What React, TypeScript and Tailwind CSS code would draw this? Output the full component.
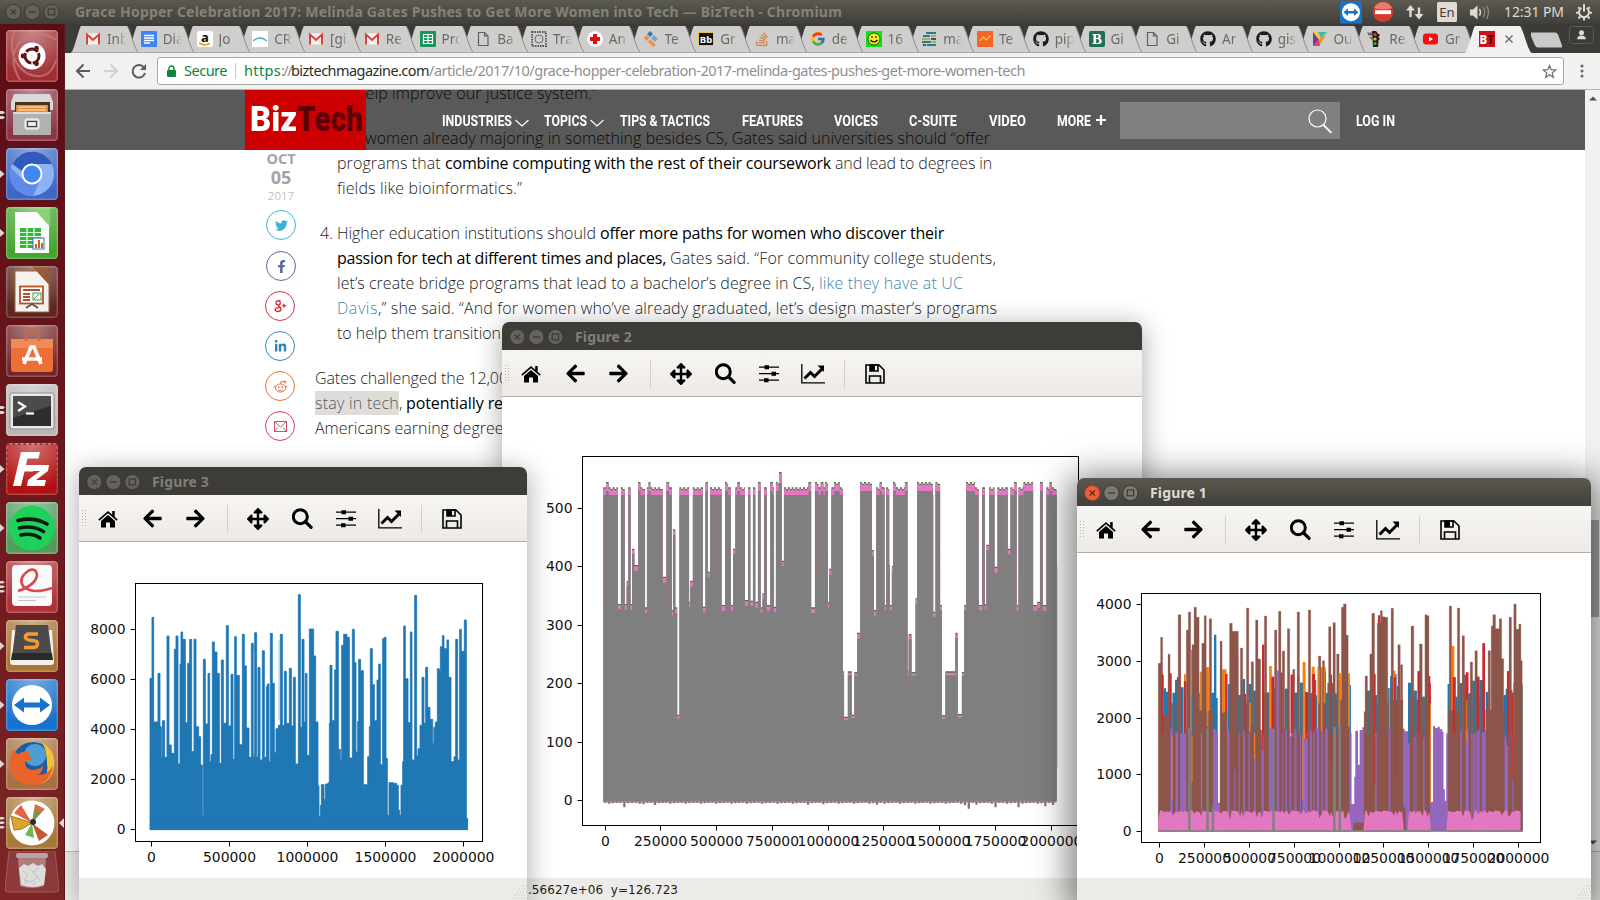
import React, { useLayoutEffect, useRef } from "react";
import {
  FaArrowLeft, FaArrowRight, FaArrowsAlt, FaFacebookF, FaGithub,
  FaLinkedinIn, FaStackOverflow, FaTwitter,
} from "react-icons/fa";
import { FcGoogle } from "react-icons/fc";

/* ---------- text set to a fixed measure ---------- */

type FitProps = { w: number; children: string; className?: string; squeeze?: boolean };

function Fit({ w, children, className = "", squeeze = false }: FitProps) {
  const ref = useRef<HTMLSpanElement>(null);
  useLayoutEffect(() => {
    const el = ref.current;
    if (!el) return;
    el.style.letterSpacing = "0px";
    el.style.transform = "none";
    const natural = el.getBoundingClientRect().width;
    if (squeeze) el.style.transform = `scaleX(${w / natural})`;
    else el.style.letterSpacing = `${(w - natural) / children.length}px`;
  }, [w, children, squeeze]);
  return (
    <span className={`inline-block shrink-0 whitespace-pre ${className}`} style={{ width: w }}>
      <span ref={ref} className="inline-block origin-left whitespace-pre">{children}</span>
    </span>
  );
}

/* ---------- top panel ---------- */

function PanelButtons({ active = false }: { active?: boolean }) {
  return (
    <svg className="shrink-0" width="57" height="18" viewBox="0 0 57 18">
      <circle cx="9.3" cy="9" r="7.6" fill={active ? "#e9603a" : "#64625b"} stroke={active ? "#a8401f" : "#35342f"} strokeWidth="0.8" />
      <path d="M6.6 6.3l5.4 5.4M12 6.3l-5.4 5.4" stroke={active ? "#5c1f0d" : "#3b3a35"} strokeWidth="1.2" />
      <circle cx="28.4" cy="9" r="7.6" fill={active ? "#7b7970" : "#64625b"} stroke="#35342f" strokeWidth="0.8" />
      <path d="M24.8 9h7.2" stroke="#3b3a35" strokeWidth="1.3" />
      <circle cx="47.4" cy="9" r="7.6" fill={active ? "#7b7970" : "#64625b"} stroke="#35342f" strokeWidth="0.8" />
      <rect x="44.2" y="6" width="6.4" height="5.8" fill="none" stroke="#3b3a35" strokeWidth="1.2" />
    </svg>
  );
}

function TopPanel() {
  return (
    <div className="flex h-6 w-full items-center bg-linear-to-b from-[#5c5a50] to-[#403f3a] pl-[4px]">
      <PanelButtons />
      <Fit w={767} className="ml-[14px] text-[14px] leading-6 font-bold text-[#85827a]">
        Grace Hopper Celebration 2017: Melinda Gates Pushes to Get More Women into Tech — BizTech - Chromium
      </Fit>
      <svg className="ml-auto shrink-0" width="160" height="24" viewBox="0 0 160 24">
        <rect x="0" y="1" width="22" height="22.5" rx="1.5" fill="#1672cc" />
        <circle cx="11" cy="12.2" r="9" fill="#fff" />
        <path d="M3.5 12.2l4.5-3.7v2.4h6v-2.4l4.5 3.7-4.5 3.7v-2.4h-6v2.4z" fill="#1672cc" />
        <circle cx="43" cy="12" r="10.2" fill="#d8392f" />
        <path d="M34 8a10 10 0 0 1 18 0q-9 3-18 0z" fill="#ea7a72" />
        <rect x="35" y="10.3" width="16" height="3.8" fill="#fff" />
        <path d="M66 10.500h3.300V17h2.400v-6.500H75l-4.500-5.500zM74.500 14h3.300V7.500h2.400V14h3.300l-4.500 5.500z" fill="#dfdbd2" />
        <rect x="97" y="2" width="20" height="20" rx="1.500" fill="#dfdbd2" />
        <path d="M130 9.500h3l4.500-4v14l-4.500-4h-3z" fill="#dfdbd2" />
        <path d="M139.500 9q2 3.300 0 6.600" stroke="#dfdbd2" strokeWidth="1.400" fill="none" />
        <path d="M143 7q3.300 5.300 0 10.600M146.500 5.500q4 6.800 0 13.600" stroke="#89867c" strokeWidth="1.400" fill="none" />
        <text x="107" y="17" fontSize="13" textAnchor="middle" fill="#3c3b37">En</text>
      </svg>
      <Fit w={60} className="ml-[4px] text-[14px] leading-6 text-[#dfdbd2]">12:31 PM</Fit>
      <svg className="mr-[7px] ml-[11px] shrink-0" width="18" height="18" viewBox="0 0 18 18" fill="none" stroke="#dfdbd2">
        <path d="M6.300 5a5 5 0 1 0 5.400 0" strokeWidth="2" />
        <path d="M9 1v7.500M3.200 4.200l1.700 1.300M14.800 4.200l-1.700 1.300M1 9.800h2.400M14.600 9.800H17M3.500 15.500l1.500-1.800M14.500 15.500L13 13.700M9 15v2.500" strokeWidth="2" />
      </svg>
    </div>
  );
}

/* ---------- browser chrome ---------- */

const gmail = (
  <g>
    <rect x="1" y="2.500" width="14" height="11" fill="#f3f1f0" />
    <path d="M2 13.500V3.500l6 5.500 6-5.500v10" fill="none" stroke="#d5433a" strokeWidth="2" />
  </g>
);
const sheet = <path d="M3.500 1.500h6l3.500 3.500v9.500h-9.500zM9.500 1.500V5H13" fill="none" stroke="#5f5f5f" strokeWidth="1.200" />;
const github = <FaGithub size={16} color="#1b1b1b" />;

const tabs: [string, React.ReactNode][] = [
  ["Inb", gmail],
  ["Dia", <g><rect width="16" height="16" rx="1" fill="#4385f0" /><path d="M3 4.500h10M3 7h10M3 9.500h10M3 12h6" stroke="#fff" strokeWidth="1.300" /></g>],
  ["Jo", <g><rect width="16" height="16" rx="2" fill="#fff" /><text x="8" y="10.500" fontSize="13" fontWeight="700" textAnchor="middle" fill="#111">a</text><path d="M2 12q6 3.500 11 .3" stroke="#f59a1b" strokeWidth="1.600" fill="none" /></g>],
  ["CR", <g><rect width="16" height="16" fill="#fff" /><path d="M1 10q7-6 14 0" stroke="#4ba7cb" strokeWidth="1.300" fill="none" /></g>],
  ["[gi", gmail],
  ["Re", gmail],
  ["Pro", <g><rect width="16" height="16" rx="1" fill="#17945a" /><path d="M3.500 3.500h9v9h-9zM3.500 6.500h9M3.500 9.500h9M8 3.500v9" stroke="#fff" fill="none" strokeWidth="1.200" /></g>],
  ["Ba", sheet],
  ["Tra", <g fill="none" stroke="#555"><rect x="1" y="1" width="14" height="14" strokeDasharray="1.500 1" strokeWidth="1.800" /><circle cx="8" cy="8" r="4" strokeWidth=".8" /></g>],
  ["An", <g><circle cx="8" cy="8" r="7.800" fill="#fff" /><path d="M8 3v10M3 8h10" stroke="#df1010" strokeWidth="4" /></g>],
  ["Te", <g><path d="M7 0l3 3-3 3-3-3z" fill="#3b78a8" /><path d="M3.500 4l3 3-3 3-3-3z" fill="#e8924a" /><path d="M11 4l4 4-3 3-4-4z" fill="#6fa9cf" /><path d="M7 8l6 6-3 2-5-5z" fill="#e8924a" /></g>],
  ["Gr", <g><rect y="1" width="16" height="14" fill="#f0c23a" /><rect x="1" y="2" width="14" height="12" fill="#111" /><text x="8" y="12" fontSize="9.500" fontWeight="700" textAnchor="middle" fill="#fff">Bb</text></g>],
  ["ma", <FaStackOverflow size={16} color="#dd8148" />],
  ["de", <FcGoogle size={16} />],
  ["16", <g><rect width="16" height="16" fill="#16df16" /><circle cx="8" cy="8" r="6" fill="#f4ee27" stroke="#222" strokeWidth=".8" /><path d="M6 5v2M10 5v2M4.500 9q3.500 4 7 0" stroke="#111" strokeWidth="1.200" fill="none" /></g>],
  ["ma", <g strokeWidth="2.200"><path d="M5 2h10M2 5h7M1 11h9M6 14h9" stroke="#2b7d8c" /><path d="M10 5h5M1 8h8M11 11h4" stroke="#9db544" /><path d="M10 8h5M2 14h3" stroke="#245c82" /></g>],
  ["Te", <g><rect width="16" height="16" fill="#f2662b" /><path d="M2.500 10l4-4 3 3 4-4.500" stroke="#ffbf36" strokeWidth="1.400" fill="none" /></g>],
  ["pip", github],
  ["Gi", <g><rect width="16" height="16" rx="2" fill="#1f6e57" /><text x="8" y="13.300" fontSize="15" fontWeight="700" textAnchor="middle" fill="#fff" className="font-['Liberation_Serif']">B</text></g>],
  ["Gi", sheet],
  ["Ar", github],
  ["gis", github],
  ["Ou", <g><path d="M1 1h14L11 8 5 9z" fill="#f7c928" /><path d="M6 1h9L9 7z" fill="#38b8c8" /><path d="M1 1l6 8-6 6z" fill="#6c3d9e" /><path d="M14 4L7 15 6 9z" fill="#f08a28" /><path d="M1 15l6-6 1 6z" fill="#e23c6a" /></g>],
  ["Re", <g><path d="M0 1.500h5l1 3H1.500zM2 6h3v3" fill="#6f6f6f" /><path d="M5 0h4l3 4-1 12H6z" fill="#26201c" /><path d="M10 4h2.500M10 8h2.500" stroke="#26201c" strokeWidth="2" /><circle cx="8" cy="3.500" r="1.600" fill="#e0402c" /><circle cx="8" cy="8" r="1.600" fill="#edb52b" /><circle cx="8" cy="12.500" r="1.600" fill="#2fae5b" /></g>],
  ["Gr", <g><rect x="0" y="2.500" width="15" height="11" rx="3" fill="#f50f0f" /><path d="M6 5.500v5l4-2.500z" fill="#fff" /></g>],
];

function Tabs() {
  return (
    <div className="flex h-[29px] w-full items-end bg-[#3c3b37] pl-[6px]">
      {tabs.map(([label, icon], i) => (
        <div key={i} className="relative flex h-7 w-[55.76px] shrink-0 items-center pl-[14px]" style={{ zIndex: 30 - i }}>
          <svg className="absolute top-0 left-0" width="68" height="28" viewBox="0 0 68 28">
            <path d="M0 28C3 26 8 3 10 1H56C59 3 64 27 68 28z" fill="#d0cecc" />
            <path d="M56 1C59 3 64 27 68 28" fill="none" stroke="#8d8b88" strokeWidth="1" />
            <path d="M0 27.500h68" stroke="#aaa8a4" />
          </svg>
          <svg className="relative shrink-0" width="16" height="16" viewBox="0 0 16 16">{icon}</svg>
          <span className="relative ml-[6px] h-5 w-[19px] overflow-hidden text-[13.500px] leading-5 whitespace-nowrap text-[#6b6966] [mask-image:linear-gradient(to_right,black_55%,transparent)]">{label}</span>
        </div>
      ))}
      <div className="relative z-40 flex h-7 w-[66px] shrink-0 items-center pl-[14px]">
        <svg className="absolute top-0 left-0" width="68" height="28" viewBox="0 0 68 28">
          <path d="M0 28C3 26 8 3 10 1H55C58 3 63 27 67 28z" fill="#f2f1f0" />
        </svg>
        <svg className="relative" width="16" height="16" viewBox="0 0 16 16">
          <rect width="16" height="16" fill="#cc1218" />
          <text x=".5" y="12.500" fontSize="11.500" fontWeight="800" fill="#fff">B</text>
          <text x="8.300" y="12.500" fontSize="11.500" fontWeight="800" fill="#51080b">T</text>
        </svg>
        <svg className="relative ml-[10px]" width="8" height="8" viewBox="0 0 8 8"><path d="M.5.5l7 7M7.500.5l-7 7" stroke="#6d6b69" strokeWidth="1.400" /></svg>
      </div>
      <svg className="shrink-0" width="68" height="28" viewBox="0 0 68 28">
        <path d="M-1 7.500h25q2 0 3 2l4 11q.5 2-1 2H7q-2 0-3-2L-1 9q0-1.500 1-1.500z" fill="#cbc9c7" />
        <rect x="38.500" y="1.500" width="24" height="17" rx="3" fill="none" stroke="#5d5b55" />
        <circle cx="50.500" cy="7.800" r="2.500" fill="#dedbd5" />
        <path d="M46.200 14.200q0-3.700 4.300-3.700t4.300 3.700z" fill="#dedbd5" />
      </svg>
    </div>
  );
}

function AddressBar() {
  return (
    <div className="flex h-[37px] w-full items-center border-b border-[#b5b3b0] bg-[#f2f1f0] pl-[10px]">
      <svg className="shrink-0" width="72" height="18" viewBox="0 0 72 18" fill="none" strokeWidth="2">
        <path d="M15 9H2.500M8.500 2.500L2 9l6.500 6.500" stroke="#5c5b59" />
        <path d="M29 9h12.500M35.500 2.500L42 9l-6.500 6.500" stroke="#d3d1ce" />
        <path d="M69 5.500A6.300 6.300 0 1 0 70 11" stroke="#5c5b59" />
        <path d="M71 2v6h-6z" fill="#5c5b59" stroke="none" />
      </svg>
      <div className="ml-[10px] flex h-7 w-[1407px] items-center rounded-[3px] border border-[#a9a7a4] bg-white pl-[9px] text-[14.500px]">
        <svg className="shrink-0" width="9" height="12" viewBox="0 0 9 12">
          <rect y="5" width="9" height="7" rx="1" fill="#11833f" />
          <path d="M2 5V3.500a2.500 2.500 0 0 1 5 0V5" fill="none" stroke="#11833f" strokeWidth="1.400" />
        </svg>
        <Fit w={43} className="ml-[8px] text-[#11833f]">Secure</Fit>
        <span className="mx-[8px] h-4 w-px bg-[#c9c7c5]" />
        <Fit w={37} className="text-[#11833f]">https</Fit>
        <Fit w={10} className="text-[#8f8f8f]">://</Fit>
        <Fit w={138} className="text-[#2c2c2c]">biztechmagazine.com</Fit>
        <Fit w={596} className="text-[#8f8f8f]">/article/2017/10/grace-hopper-celebration-2017-melinda-gates-pushes-get-more-women-tech</Fit>
        <svg className="mr-[6px] ml-auto" width="15" height="15" viewBox="0 0 15 15">
          <path d="M7.500 1.500l1.700 4.200 4.500.3-3.500 2.900 1.200 4.400-3.900-2.500-3.900 2.500 1.200-4.400L1.300 6l4.500-.3z" fill="none" stroke="#6b6a68" strokeWidth="1.200" />
        </svg>
      </div>
      <svg className="ml-[16px]" width="4" height="14" viewBox="0 0 4 14" fill="#6b6a68">
        <circle cx="2" cy="2" r="1.600" /><circle cx="2" cy="7" r="1.600" /><circle cx="2" cy="12" r="1.600" />
      </svg>
    </div>
  );
}

/* ---------- article page ---------- */

const lineCls = "flex h-[25px] items-center";
const strong = "font-medium text-black";
const link = "text-[#3f86ae]";

function Article() {
  return (
    <div className="mt-[-9.5px] flex flex-col gap-5 text-[16px] font-light text-[#1c1c1c]">
      <div className={`${lineCls} pl-[41px]`}><Fit w={241}>help improve our justice system.”</Fit></div>
      <div className="pl-[22px]">
        <div className={lineCls}><Fit w={653}>For women already majoring in something besides CS, Gates said universities should “offer</Fit></div>
        <div className={lineCls}>
          <Fit w={108}>programs that </Fit>
          <Fit w={390} className={strong}>combine computing with the rest of their coursework </Fit>
          <Fit w={157}>and lead to degrees in</Fit>
        </div>
        <div className={lineCls}><Fit w={185}>fields like bioinformatics.”</Fit></div>
      </div>
      <div className="pl-[5px]">
        <div className={lineCls}>
          <Fit w={17}>4. </Fit>
          <Fit w={263}>Higher education institutions should </Fit>
          <Fit w={344} className={strong}>offer more paths for women who discover their</Fit>
        </div>
        <div className="pl-[17px]">
          <div className={lineCls}>
            <Fit w={333} className={strong}>passion for tech at different times and places, </Fit>
            <Fit w={326}>Gates said. “For community college students,</Fit>
          </div>
          <div className={lineCls}>
            <Fit w={482}>let’s create bridge programs that lead to a bachelor’s degree in CS, </Fit>
            <Fit w={144} className={link}>like they have at UC</Fit>
          </div>
          <div className={lineCls}>
            <Fit w={41} className={link}>Davis</Fit>
            <Fit w={619}>,” she said. “And for women who’ve already graduated, let’s design master’s programs</Fit>
          </div>
          <div className={lineCls}><Fit w={164}>to help them transition</Fit></div>
        </div>
      </div>
      <div>
        <div className={lineCls}><Fit w={202}>Gates challenged the 12,000</Fit></div>
        <div className={lineCls}>
          <Fit w={84} className="bg-[#dfddda] text-[#5a5a5a]">stay in tech</Fit>
          <Fit w={7}>, </Fit>
          <Fit w={97} className={strong}>potentially re</Fit>
        </div>
        <div className={lineCls}><Fit w={196}>Americans earning degrees</Fit></div>
      </div>
      <div className={lineCls}><Fit w={187}>“And think about the single</Fit></div>
    </div>
  );
}

function Social({ color, children, className = "" }: { color: string; children: React.ReactNode; className?: string }) {
  return (
    <div className={`flex size-[30px] items-center justify-center rounded-full border ${className}`} style={{ color, borderColor: color }}>
      {children}
    </div>
  );
}

function ShareRail() {
  return (
    <div className="flex w-[70px] flex-col items-center pt-[59px]">
      <span className="h-[19px] text-[14.500px] leading-[19px] font-bold text-[#a3a3a8]">OCT</span>
      <span className="h-[19px] text-[18px] leading-[19px] font-bold text-[#a3a3a8]">05</span>
      <span className="h-[18px] text-[11.500px] leading-[18px] font-light text-[#a3a3a8]">2017</span>
      <Social color="#35b5d5" className="mt-[5px]"><FaTwitter size={13} /></Social>
      <Social color="#5a6a9e" className="mt-[11px]"><FaFacebookF size={13} /></Social>
      <Social color="#d4333f" className="mt-[10px] -ml-[2px]">
        <svg width="14" height="14" viewBox="0 0 14 14" fill="none" stroke="currentColor">
          <path d="M7.500 1.700H5.500Q3 1.700 3 3.800t2.300 2.100Q7.300 5.900 7.300 3.900 7.300 2.200 5.500 1.700M5.700 6q-.8.900.7 1.700 1.600.9 1.600 2.300Q8 12.500 5 12.500q-2.800 0-2.800-1.900 0-2 4.200-1.900" strokeWidth="1.400" />
          <path d="M11 4.700v4M9 6.700h4" strokeWidth="1.300" />
        </svg>
      </Social>
      <Social color="#2f86b3" className="mt-[10px] -ml-[2px]"><FaLinkedinIn size={13} /></Social>
      <Social color="#e9703c" className="mt-[10px] -ml-[2px]">
        <svg width="15" height="13" viewBox="0 0 15 13" fill="none" stroke="currentColor">
          <ellipse cx="7.500" cy="8" rx="5.200" ry="4" /><path d="M7.500 4l.8-2.800 2.700.7M2.800 6Q.6 6 1 7.500M12.200 6q2.200 0 1.800 1.500M5.300 9.700q2.200 1.500 4.400 0" />
          <circle cx="12" cy="2" r="1" /><circle cx="5.700" cy="7.200" r=".9" fill="currentColor" stroke="none" /><circle cx="9.300" cy="7.200" r=".9" fill="currentColor" stroke="none" />
        </svg>
      </Social>
      <Social color="#d23a5c" className="mt-[10px] -ml-[2px]">
        <svg width="13" height="11" viewBox="0 0 13 11" fill="none" stroke="currentColor"><path d="M.5.5h12v10H.5zM1 1l5.500 5L12 1M.5 10.500L4 6.500M12.500 10.500L9 6.500" strokeWidth=".9" /></svg>
      </Social>
    </div>
  );
}

const Chevron = () => (
  <svg className="mt-[3px] ml-[3px] shrink-0" width="14" height="8" viewBox="0 0 14 8"><path d="M.5 1L7 7l6.500-6" stroke="#fff" strokeWidth="1.200" fill="none" /></svg>
);

function SiteHeader() {
  return (
    <div className="absolute inset-x-0 top-0 z-10 flex h-[60px] items-center bg-black/65 font-['Roboto','Open_Sans',sans-serif] text-[15.500px] font-bold text-white">
      <div className="ml-[180px] flex h-[60px] w-[121px] shrink-0 items-center bg-[#cc0000] pl-[5px] text-[35px] leading-[62px] font-black">
        <Fit w={47} squeeze className="relative z-10">Biz</Fit>
        <Fit w={66} squeeze className="text-[#5a0006]">Tech</Fit>
      </div>
      <div className="flex items-center pt-[3px]">
        <Fit w={70} squeeze className="ml-[76px]">INDUSTRIES</Fit>
        <Chevron />
        <Fit w={43} squeeze className="ml-[15px]">TOPICS</Fit>
        <Chevron />
        <Fit w={90} squeeze className="ml-[16px]">{"TIPS & TACTICS"}</Fit>
        <Fit w={61} squeeze className="ml-[32px]">FEATURES</Fit>
        <Fit w={44} squeeze className="ml-[31px]">VOICES</Fit>
        <Fit w={48} squeeze className="ml-[31px]">C-SUITE</Fit>
        <Fit w={37} squeeze className="ml-[32px]">VIDEO</Fit>
        <Fit w={34} squeeze className="ml-[31px]">MORE</Fit>
        <svg className="mb-[3px] ml-[5px]" width="10" height="10" viewBox="0 0 10 10"><path d="M5 0v10M0 5h10" stroke="#fff" strokeWidth="2.200" /></svg>
      </div>
      <div className="mt-px ml-[14px] flex h-[37px] w-[220px] items-center justify-end bg-[#808080] pr-[8px]">
        <svg width="24" height="24" viewBox="0 0 24 24" fill="none" stroke="#fff" strokeWidth="1.200"><circle cx="9.500" cy="9.500" r="8.500" /><path d="M15.500 16l8 8" strokeWidth="1.800" /></svg>
      </div>
      <Fit w={39} squeeze className="mt-[3px] ml-[16px]">LOG IN</Fit>
    </div>
  );
}

function Browser() {
  return (
    <div className="flex min-w-0 flex-1 flex-col">
      <Tabs />
      <AddressBar />
      <div className="flex h-[761px] bg-white">
        <div className="relative flex h-full w-[1520px] overflow-hidden pl-[181px] font-['Open_Sans','Noto_Sans',sans-serif]">
          <SiteHeader />
          <ShareRail />
          <div className="-ml-px"><Article /></div>
        </div>
        <div className="flex w-[15px] flex-col items-center justify-between bg-[#f1f1f1] pt-[6px] pb-[6px]">
          <svg width="8" height="5" viewBox="0 0 8 5"><path d="M0 4.500L4 .5l4 4z" fill="#505050" /></svg>
          <span className="mt-auto mb-[223px] h-[97px] w-[13px] bg-[#a8a8a8]" />
          <svg width="8" height="5" viewBox="0 0 8 5"><path d="M0 .5l4 4 4-4z" fill="#505050" /></svg>
        </div>
      </div>
      <div className="flex-1 border-t border-[#c3c0bd] bg-[#f0eeec]" />
    </div>
  );
}

/* ---------- launcher ---------- */

type App = { tile: string; pips?: number; active?: boolean; art: React.ReactNode };

const apps: App[] = [
  { tile: "#a02f33", art: (
    <g>
      <path d="M8 0Q0 30 22 44Q44 52 50 30M50 10Q30-4 12 14Q2 30 14 50" fill="none" stroke="#c97f7f" strokeWidth="2" opacity=".7" />
      <circle cx="26" cy="26" r="13.500" fill="#fff" />
      <circle cx="26" cy="26" r="7" fill="none" stroke="#5b1515" strokeWidth="3" strokeDasharray="13.200 1.400" strokeDashoffset="3" />
      <circle cx="17" cy="26" r="2.400" fill="#5b1515" /><circle cx="30.500" cy="18.200" r="2.400" fill="#5b1515" /><circle cx="30.500" cy="33.800" r="2.400" fill="#5b1515" />
    </g>) },
  { tile: "#8e3547", pips: 2, art: (
    <g>
      <path d="M8 5h36l3 8v8H5v-8z" fill="#d9d9d8" />
      <rect x="9" y="13" width="35" height="12" fill="#4b3023" />
      <path d="M10 16h32v10H10z" fill="#e9863a" /><path d="M12 18h28M12 21h28" stroke="#f8cf98" strokeWidth="1.300" />
      <rect x="7" y="23" width="38" height="23" rx="1" fill="#b1b1b0" /><rect x="7" y="23" width="38" height="2" fill="#dcdcdb" />
      <rect x="19" y="30" width="14" height="10" rx="2" fill="#cfcfce" stroke="#fff" /><rect x="21.500" y="32.500" width="9" height="5" fill="#efefef" stroke="#444" strokeWidth="1.200" />
    </g>) },
  { tile: "#3e66c4", pips: 1, art: (
    <g>
      <circle cx="26" cy="26" r="22" fill="#8db3f4" />
      <path d="M5 20a22 22 0 0 0 22 28l8-18-9 5-10-4z" fill="#5c8bea" />
      <path d="M6.500 16A22 22 0 0 1 46 16H26l-9 8z" fill="#2f5cbc" />
      <circle cx="26" cy="26" r="9.500" fill="#4285f4" stroke="#fff" strokeWidth="2" />
    </g>) },
  { tile: "#45a52f", pips: 1, art: (
    <g>
      <path d="M9 5h22l12 13v28H9z" fill="#fcfcfc" /><path d="M26 0h18v20z" fill="#8fd67a" opacity=".8" />
      <path d="M14 21h21v20H14z" fill="#30b837" /><path d="M14 25.500h21M14 29.500h21M14 33.500h21M14 37.500h21M21 21v20M28 21v20" stroke="#e8ffe8" strokeWidth="1.200" />
      <rect x="27" y="31" width="11" height="11" fill="#fff" stroke="#3571b8" /><path d="M30 41v-4M33 41v-8M36 41v-5" stroke="#d45d2d" strokeWidth="2" />
    </g>) },
  { tile: "#5c2722", art: (
    <g>
      <path d="M9 5h22l12 13v28H9z" fill="#f6f1ec" stroke="#9b6b3a" /><path d="M26 0h18v20z" fill="#9c5630" opacity=".8" />
      <rect x="14" y="20.500" width="23" height="17" fill="#fff" stroke="#b0532a" strokeWidth="1.800" />
      <path d="M17 24h17M17 28h7M17 31h7M17 34h7" stroke="#a8532c" strokeWidth="1.800" /><rect x="27" y="27" width="8" height="7" fill="none" stroke="#3c8d57" /><path d="M28 33l5-5" stroke="#3c8d57" />
      <path d="M20 42l6-4 6 4" stroke="#555" strokeWidth="1.800" fill="none" />
    </g>) },
  { tile: "#75272a", art: (
    <g>
      <path d="M5 14h42v30q0 3-3 3H8q-3 0-3-3z" fill="#ec6f38" /><path d="M5 14h42v9H5z" fill="#f28a55" />
      <path d="M20 16V9q0-4 4-4h5q4 0 4 4v7" fill="none" stroke="#c7683e" strokeWidth="2.500" />
      <path d="M18 39l7-17h3l7 17M16 34h20" fill="none" stroke="#fff" strokeWidth="3.600" />
    </g>) },
  { tile: "#b9b7b5", pips: 2, art: (
    <g>
      <rect x="4" y="9" width="44" height="36" rx="2" fill="#e8e8e7" stroke="#8e8e8c" /><rect x="7" y="12" width="38" height="30" fill="#2d2d2d" /><path d="M7 12h38v10L7 34z" fill="#4b4b4b" />
      <path d="M12 18l7 4.500-7 4.500" fill="none" stroke="#fff" strokeWidth="2.200" /><path d="M20 29.500h8" stroke="#fff" strokeWidth="2.200" />
    </g>) },
  { tile: "#b31111", pips: 1, art: (
    <g>
      <rect x="1" y="1" width="50" height="50" fill="none" stroke="#7b2020" strokeWidth="2" strokeDasharray="2.500 3" />
      <path d="M15 9h19l-1.500 6.500H21.500L20 22h8.500L27 28.500h-8.500L15 43H7z" fill="#fff" />
      <path d="M25 22h18l-1 6-12 9h10l-1.500 6H21l1-6 12-9h-10z" fill="#fff" />
    </g>) },
  { tile: "#549b5e", pips: 1, art: (
    <g>
      <circle cx="26" cy="26" r="22.500" fill="#1ed15b" />
      <path d="M12 18.500q16-4 29 3.500M13.500 26q13-3 24 3.500M15 33q11-2.500 19 3" fill="none" stroke="#101a12" strokeWidth="3.600" strokeLinecap="round" />
    </g>) },
  { tile: "#b03237", pips: 3, art: (
    <g>
      <rect x="6" y="4" width="40" height="41" rx="4" fill="#fbfafa" />
      <path d="M12 30Q30 24 31 14Q30 6 22 10Q12 17 17 25Q26 34 46 27" fill="none" stroke="#d54a53" strokeWidth="2.600" />
      <path d="M12 36h28M12 39.500h18" stroke="#c5c4c4" strokeWidth="1" />
    </g>) },
  { tile: "#ad7434", pips: 1, art: (
    <g>
      <path d="M6 10h40l2 32q0 3-3 3H7q-3 0-3-3z" fill="#f3f1ee" /><path d="M10 5h32l4 32H6z" fill="#4b4b4b" /><path d="M6 33h40l1 7H5z" fill="#2a2a2a" />
      <path d="M32 14H22q-3 1-2.500 4 1 2 7 2.500 6 .5 5 4-1 3-4 3H18" fill="none" stroke="#f39a32" strokeWidth="3.600" />
    </g>) },
  { tile: "#1672cc", pips: 1, art: (
    <g><circle cx="26" cy="26" r="20" fill="#fff" /><path d="M8 26l10-7.500v5h16v-5L44 26l-10 7.500v-5H18v5z" fill="#1672cc" /></g>) },
  { tile: "#a97143", pips: 1, art: (
    <g>
      <circle cx="27" cy="25" r="21" fill="#1d5d9f" /><circle cx="29" cy="17" r="11" fill="#4c9fd6" />
      <path d="M36 5q14 7 12 24-2 13-13 17 8-10 6-20 0-14-5-21z" fill="#f5c237" />
      <path d="M5 17l3-6q1 4 4 5 4-3 11-2-2 4 3 5-1 4-7 5 0 8 9 8 7-1 9-5 0 8-6 10 12 0 16-10-2 20-21 20Q5 46 4 26z" fill="#e9632a" />
    </g>) },
  { tile: "#a8793a", pips: 3, active: true, art: (
    <g>
      <circle cx="26" cy="26" r="22.500" fill="#fff" />
      <path d="M26 25L29 7l10 5z" fill="#d9703f" /><path d="M26 26L5 19l3 14 8-1z" fill="#dba62b" stroke="#a37a1c" /><path d="M27 25l2-13 6 4z" fill="#6c9c4b" /><path d="M26 26l7 18 9-6z" fill="#c4572f" /><path d="M26 26l-7 12 9 3z" fill="#76b263" /><path d="M26 26L15 8l-7 8z" fill="#e0673f" />
      <circle cx="27" cy="25" r="3" fill="#2f2f2f" />
    </g>) },
];

function Launcher() {
  return (
    <div className="flex w-[65px] shrink-0 flex-col gap-[7px] border-r border-[#5d1a1d] bg-linear-to-b from-[#5b0d14] via-[#6c181d] to-[#7e2526] pt-[6px]">
      {apps.map((app, i) => (
        <div key={i} className="flex h-[52px] items-center">
          <svg className="shrink-0" width="6" height="14" viewBox="0 0 6 14" fill="#dcd6d3">
            {app.pips === 1 && <path d="M0 3l4.500 4L0 11z" />}
            {app.pips === 2 && <path d="M0 3h3l2 1.500L3 6H0zM0 8h3l2 1.500L3 11H0z" />}
            {app.pips === 3 && <path d="M0 1h3l2 1.300-2 1.300H0zM0 5.500h3l2 1.300-2 1.300H0zM0 10h3l2 1.300-2 1.300H0z" />}
          </svg>
          <svg width="52" height="52" viewBox="0 0 52 52">
            <defs>
              <radialGradient id={`shine${i}`} cx=".5" cy="0" r=".9">
                <stop offset="0" stopColor="#fff" stopOpacity=".42" />
                <stop offset="1" stopColor="#fff" stopOpacity="0" />
              </radialGradient>
            </defs>
            <rect width="52" height="52" rx="4" fill={app.tile} />
            <rect width="52" height="52" rx="4" fill={`url(#shine${i})`} />
            {app.art}
            <rect x=".7" y=".7" width="50.600" height="50.600" rx="3.500" fill="none" stroke="#fff" strokeOpacity=".22" strokeWidth="1.400" />
          </svg>
          {app.active && <svg className="ml-px" width="5" height="10" viewBox="0 0 5 10"><path d="M5 0v10L0 5z" fill="#e6e0dd" /></svg>}
        </div>
      ))}
      <svg className="mt-[-5px] ml-[5px]" width="54" height="42" viewBox="0 0 54 42">
        <path d="M4 0h46l4 38q0 3-3 3H3q-3 0-3-3z" fill="#8d3a3c" stroke="#a35a5b" />
        <path d="M13 7h28l-2 28q-12 4-24 0z" fill="#b58f8f" opacity=".8" />
        <path d="M14 17l5-4 4 2 5-3 5 3 4-2 4 5-2 16q-11 4-23 0z" fill="#dedddc" />
        <path d="M18 20l5 4-4 5 7 2 6-4-4-6 6-4M24 17l4 4M32 24l3 6M19 33l3-3M27 34l4-3" stroke="#c2c0c0" fill="none" />
        <rect x="11" y="2" width="32" height="5" rx="2" fill="#c9bcbc" opacity=".8" />
      </svg>
    </div>
  );
}

/* ---------- figure windows ---------- */

function Tool({ children }: { children: React.ReactNode }) {
  return <span className="flex w-11 shrink-0 items-center justify-center">{children}</span>;
}
const Divider = () => (
  <span className="flex w-[18px] shrink-0 justify-center"><span className="h-7 w-px bg-[#d3cfc9]" /></span>
);

function FigureToolbar() {
  return (
    <div className="flex h-[47px] items-center border-b border-[#b5aea5] bg-linear-to-b from-[#f7f5f2] to-[#edeae6] pt-px pl-[3px] text-black">
      <svg className="shrink-0" width="4" height="18" viewBox="0 0 4 18"><path d="M.5 0v18M3.500 0v18" stroke="#b9b3ab" strokeDasharray="1 2" /></svg>
      <Tool>
        <svg width="20" height="18" viewBox="0 0 20 18"><path d="M10 5l7 6v6.500h-5v-5H8v5H3V11z" /><path d="M.8 10.200L10 2.200l9.200 8" fill="none" stroke="#000" strokeWidth="1.700" /><path d="M14.200 1h2.500v6l-2.500-2z" /></svg>
      </Tool>
      <Tool><FaArrowLeft size={21} /></Tool>
      <Tool><FaArrowRight size={21} className="mr-px" /></Tool>
      <Divider />
      <Tool><FaArrowsAlt size={22} /></Tool>
      <Tool>
        <svg width="21" height="21" viewBox="0 0 21 21" fill="none" stroke="#000"><circle cx="8.300" cy="8.700" r="7" strokeWidth="3" /><path d="M13.600 13.800l5.500 5.500" strokeWidth="3.200" strokeLinecap="round" /></svg>
      </Tool>
      <Tool>
        <svg width="20" height="19" viewBox="0 0 20 19"><path d="M0 3.200h20M0 9.700h20M0 16.200h20" stroke="#000" strokeWidth="1.300" /><path d="M5.500 1.200h4.500v4H5.500zM12.500 7.700h4.500v4h-4.500zM5 14.200h4.500v4H5z" /></svg>
      </Tool>
      <Tool>
        <svg width="24" height="21" viewBox="0 0 24 21"><path d="M.8 1v18.800H24" fill="none" stroke="#000" strokeWidth="1.300" /><path d="M3.500 15.500l6-6 4 4L21 6" fill="none" stroke="#000" strokeWidth="3" /><path d="M16.500 2.500H23V9z" /></svg>
      </Tool>
      <Divider />
      <Tool>
        <svg width="20" height="20" viewBox="0 0 20 20" fill="none" stroke="#000" strokeWidth="1.600"><path d="M1 1h13l5 5v13H1zM4.500 19v-7h11v7" /><path d="M5 1h8v6H5z" /><path d="M5 1h5v6H5z" fill="#000" stroke="none" /></svg>
      </Tool>
    </div>
  );
}

type WinProps = { title: string; className: string; active?: boolean; status?: React.ReactNode; children: React.ReactNode };

function FigureWindow({ title, className, active = false, status, children }: WinProps) {
  return (
    <div className={`absolute bottom-0 flex flex-col rounded-t-[7px] bg-white ${active ? "shadow-[0_6px_34px_8px_rgba(0,0,0,0.5)]" : "shadow-[0_4px_26px_2px_rgba(0,0,0,0.3)]"} ${className}`}>
      <div className={`flex h-7 shrink-0 items-center rounded-t-[7px] pt-[2px] pl-[6px] ${active ? "bg-linear-to-b from-[#5b594f] to-[#403f3a] text-[#dfdbd2]" : "bg-[#3d3c37] text-[#817f77]"}`}>
        <PanelButtons active={active} />
        <Fit w={57} className="ml-[10px] text-[14px] leading-[26px] font-bold">{title}</Fit>
      </div>
      <FigureToolbar />
      <div className="relative min-h-0 flex-1 overflow-hidden">{children}</div>
      <div className="flex h-[22px] shrink-0 items-center bg-[#edebe7] pt-[2px] text-[12px] text-[#1c1c1c]">
        {status}
        <svg className="mt-[3px] ml-auto" width="16" height="14" viewBox="0 0 16 14"><path d="M12 1h4M8 4h8M6 7h10M4 10h12M1 13h15" stroke="#c2bcb3" strokeDasharray="1 2" /></svg>
      </div>
    </div>
  );
}

type Pt = [number, number];
const parse = (s: string): Pt[] => s.trim().split(/\s+/).map((p) => p.split(",").map(Number) as Pt);

/** Step outline of a min/max trace: each point holds its height until the next one. */
function steps(points: Pt[], base: number) {
  let d = `M${points[0][0]} ${base}`;
  points.forEach(([x, y], i) => {
    const next = points[i + 1];
    d += `L${x} ${y}${next ? `H${next[0]}` : ""}`;
  });
  return `${d}V${base}Z`;
}
/** Separate bars written as "x1,x2,top". */
const bars = (s: string, base: number) =>
  s.trim().split(/\s+/).map((b) => { const [a, c, t] = b.split(",").map(Number); return `M${a} ${base}V${t}H${c}V${base}Z`; }).join("");

type AxesProps = {
  x0: number; x1: number; y0: number; y1: number;
  xt: [number, string][]; yt: [number, string][];
};
function Axes({ x0, x1, y0, y1, xt, yt }: AxesProps) {
  return (
    <g fontSize="13.900" fill="#111" className="font-['DejaVu_Sans',sans-serif]">
      <rect x={x0} y={y0} width={x1 - x0} height={y1 - y0} fill="none" stroke="#000" />
      {xt.map(([x, t]) => (
        <g key={t}><path d={`M${x} ${y1}v5`} stroke="#000" /><text x={x} y={y1 + 20.4} textAnchor="middle">{t}</text></g>
      ))}
      {yt.map(([y, t]) => (
        <g key={t}><path d={`M${x0} ${y}h-5`} stroke="#000" /><text x={x0 - 10} y={y + 4.9} textAnchor="end">{t}</text></g>
      ))}
    </g>
  );
}

const fig3 = parse(`240,655 246,472 251,786 264,640 270,800 274,892 277,782 284,892 291,528 297,855 304,880 313,568 318,528 324,912
330,612 333,516 338,538 346,788 353,610 359,538 365,875 372,538 378,800 386,830 392,915 397,1066 400,598 406,792 414,640 419,905 423,884
427,546 433,576 441,640 448,910 454,600 460,790 469,497 475,798 483,643 489,898 494,530 499,646 508,854 517,523 523,617 529,804 537,892
544,550 550,890 554,518 560,892 564,622 570,900 577,572 583,892 589,680 592,672 597,905 601,520 607,670 613,878 618,806 625,796 631,523
637,796 643,634 649,790 658,625 664,798 670,652 676,912 685,404 691,802 696,538 702,786 706,640 711,886 718,507 731,588 737,786 744,978
747,1070 751,1036 754,974 762,1018 766,972 774,968 778,790 780,616 786,782 794,630 798,514 805,868 811,898 815,556 821,523 831,532
838,894 847,508 853,608 858,876 863,784 866,598 872,632 880,974 893,890 898,800 901,566 907,674 913,782 921,660 926,612 931,914 938,536
943,532 948,895 952,1066 957,968 970,970 980,976 985,1050 989,1066 993,976 998,905 1001,498 1006,656 1014,788 1021,516 1026,900 1034,406
1040,888 1044,866 1050,796 1056,652 1062,790 1067,622 1073,742 1080,778 1088,850 1091,802 1096,786 1102,626 1108,632 1111,560 1117,527
1122,566 1131,540 1136,652 1143,905 1152,890 1157,538 1163,900 1169,508 1174,574 1183,480 1189,1075 1193,1110`);

const fig2 = parse(`270,262 277,246 284,262 308,612 316,262 326,612 331,542 335,262 341,612 345,446 351,495 361,246 367,262 379,622
384,262 388,246 393,262 425,530 435,246 442,262 449,630 452,388 458,622 463,944 469,262 494,605 497,542 504,262 530,620 537,246 543,515
549,262 579,615 588,246 596,262 603,615 609,446 615,262 620,246 627,262 640,600 648,262 654,602 661,262 667,605 674,246 681,622 686,580
690,262 697,615 706,246 713,262 716,620 721,246 729,216 736,482 742,262 806,246 813,622 823,246 832,262 838,246 845,262 849,246 857,606
860,506 866,262 873,246 888,262 896,814 899,950 909,814 919,944 926,816 933,698 941,246 972,450 977,630 983,262 992,246 998,262 1005,615
1009,262 1017,495 1019,615 1024,498 1027,246 1035,262 1058,246 1065,814 1068,702 1075,816 1086,594 1090,246 1131,635 1138,246 1150,615
1155,946 1164,814 1190,698 1196,942 1207,816 1213,615 1218,246 1241,262 1251,615 1260,262 1267,612 1271,434 1278,262 1292,500 1300,262
1327,446 1334,262 1343,246 1350,615 1355,262 1368,246 1393,615 1404,605 1411,246 1418,615 1428,262 1436,246 1442,262 1454,262`);

/* small ripple along the tall plateaus */
const ripple: Pt[] = fig2.flatMap(([x, y], i): Pt[] => {
  const end = fig2[i + 1] ? fig2[i + 1][0] : x;
  if (y > 300 || end - x < 8) return [[x, y]];
  const out: Pt[] = [];
  for (let p = x, k = 0; p < end - 2; p += 5, k++) out.push([p, y + (k % 2 ? 5 : 0)]);
  return out;
});
const capLine: Pt[] = ripple.map(([x, y]) => [x, y + 4]);
const grayTop: Pt[] = fig2.map(([x, y], i) => [x, y < 255 ? (y < 230 ? 248 : 273) : y < 300 ? 285 : y + (y > 800 ? 10 : 16) + (i % 3)]);

const dips = Array.from({ length: 118 }, (_, i) => {
  const deep: Record<number, number> = { 5: 18, 10: 9, 13: 11, 53: 10, 57: 9, 71: 10, 94: 12, 95: 22, 97: 10, 102: 18, 108: 18, 115: 15, 117: 11 };
  return `M${272 + i * 10} 1204h6v${deep[i] ?? 4 + ((i * 7) % 4)}h-6z`;
}).join("");

function Figure2Plot() {
  return (
    <svg className="absolute top-0 left-0" width="640" height="481" viewBox="502 397 640 481">
      <g transform="translate(500 400) scale(.38270 .33333)">
        <path d={steps(ripple, 1204)} fill="#3f7a3c" />
        <path d={steps(capLine, 1204)} fill="#e377c2" />
        <path d={dips} fill="#8a7285" />
        <path d={steps(grayTop, 1204)} fill="#7f7f7f" />
        <path d="M270 1206H1454" stroke="#b0608f" strokeWidth="3" />
        <path d="M274 285V640M435 535V640M572 285V525M564 285V505M832 285V530M846 285V575M957 285V640M1040 500V570M1318 285V520M1368 285V525M1242 285V630M1399 615V715M742 490V640M1074 700V960M945 285V720M1133 285V640" stroke="#a8747f" strokeWidth="1.500" fill="none" />
        <path d="M1455.500 500V1105" stroke="#c99bb8" strokeWidth="2" />
        <path d="M1453 285V1204" stroke="#7f7f7f" strokeWidth="3" />
      </g>
      <Axes x0={582.5} x1={1078.5} y0={456.5} y1={825.5}
        xt={[[605.5, "0"], [660.5, "250000"], [716.5, "500000"], [772.5, "750000"], [828.5, "1000000"], [883.5, "1250000"], [939.5, "1500000"], [995.5, "1750000"], [1051.5, "2000000"]]}
        yt={[[508.5, "500"], [566.5, "400"], [625.5, "300"], [683.5, "200"], [742.5, "100"], [800.5, "0"]]} />
    </svg>
  );
}

function Figure3Plot() {
  return (
    <svg className="absolute top-0 left-0" width="448" height="336" viewBox="79 542 448 336">
      <g transform="translate(70 460) scale(.33333)">
        <path d={steps(fig3, 1109)} fill="#1f77b4" stroke="#1f77b4" strokeWidth="2.500" strokeLinejoin="round" />
        <path d="M240 1085h952v25H240z" fill="#1f77b4" />
        <path d="M551 570V880M571 640V880M627 540V780M1091 800V850" stroke="#7fb4d8" strokeWidth="2" />
      </g>
      <Axes x0={135.5} x1={482.5} y0={583.5} y1={841.5}
        xt={[[151.5, "0"], [229.5, "500000"], [307.5, "1000000"], [385.5, "1500000"], [463.5, "2000000"]]}
        yt={[[629.5, "8000"], [679.5, "6000"], [729.5, "4000"], [779.5, "2000"], [829.5, "0"]]} />
    </svg>
  );
}

const blueBars = `277,284,655 284,291,665 303,311,668 311,318,630 326,336,652 360,367,676 378,384,668 418,426,668 426,433,494 433,437,684
467,476,642 495,504,675 510,518,627 528,537,642 542,550,662 583,591,668 604,607,656 635,645,656 662,672,668 681,690,638 703,716,670
723,731,676 757,766,670 773,789,670 794,800,680 826,831,645 878,887,662 903,909,676 940,947,655 947,953,618 960,966,612 967,972,648
1000,1010,638 1016,1026,662 1042,1050,680 1063,1068,680 1117,1123,642 1140,1147,680 1152,1160,640 1166,1172,614 1178,1187,672 1190,1198,632
1211,1223,630 1230,1238,666 1282,1289,675 1289,1296,656 1305,1312,668 1334,1339,645`;
const orangeBars = `300,305,800 337,343,613 357,361,540 384,391,605 402,411,592 451,463,598 529,534,698 545,548,790 589,597,588 688,697,576
715,724,590 732,757,592 795,802,610 822,828,610 943,947,655 957,963,602 1048,1053,800 1064,1068,740 1129,1137,528 1169,1175,790`;
const redBars = `271,277,614 293,301,610 316,322,622 337,344,634 459,466,612 486,492,512 516,521,672 568,575,524 596,604,620 624,628,608
653,660,614 673,679,618 696,704,666 717,725,612 751,757,606 769,775,614 899,904,612 911,917,436 958,965,622 1028,1036,604 1060,1066,618
1132,1141,622 1171,1179,607 1193,1199,672 1204,1211,620 1220,1228,520 1293,1300,604 1307,1311,668`;
const purple = parse(`263,790 297,775 303,800 315,786 320,800 330,790 345,778 357,790 372,776 400,774 423,778 433,788 438,998 444,814 466,780
472,805 498,784 503,798 512,780 530,786 545,800 567,780 588,776 603,776 612,602 617,776 650,800 654,778 688,806 702,778 730,776 742,786
755,776 778,770 800,768 829,788 833,1002 841,920 844,782 852,884 857,780 865,772 873,778 903,790 942,774 985,776 990,784 1000,820 1008,776
1022,790 1045,804 1068,996 1074,768 1080,774 1088,770 1094,778 1102,786 1105,958 1109,992 1113,790 1118,780 1155,780 1180,790 1195,784
1205,780 1230,786 1285,800 1292,826 1300,800 1338,1084`);
const brownBars = `261,268,580 268,274,502 274,298,735 290,296,553 303,315,790 305,309,700 320,328,434 344,350,480 350,357,426 361,367,524 367,374,412
374,382,442 364,423,722 390,397,520 397,403,437 412,419,446 444,450,514 448,465,728 472,480,460 480,498,484 489,498,555 504,511,534 503,512,675
516,530,700 522,529,414 533,545,760 536,543,575 549,556,450 550,567,780 556,564,567 575,582,438 572,588,668 600,612,700 605,612,480 617,624,424
617,637,790 628,635,543 641,650,740 643,650,476 654,667,800 659,665,598 671,687,790 672,679,426 702,712,800 705,712,420 716,730,790 724,728,630
735,742,558 745,755,790 747,753,572 762,778,640 765,772,470 778,785,458 785,800,690 789,796,552 800,826,690 803,809,412 809,817,402 817,823,496
870,903,725 873,880,618 887,893,552 893,901,430 907,942,700 909,918,460 918,924,422 924,931,440 931,940,442 948,985,690 950,957,415 970,977,524
978,984,584 1006,1022,680 1009,1017,468 1025,1045,690 1034,1042,522 1050,1056,434 1056,1062,437 1048,1065,690 1119,1155,722 1122,1129,408
1146,1153,414 1160,1167,497 1160,1170,640 1180,1190,670 1184,1191,576 1198,1205,542 1212,1218,680 1230,1285,720 1237,1244,542 1246,1251,468
1251,1259,434 1259,1270,476 1270,1277,446 1277,1283,566 1296,1308,660 1299,1306,442 1312,1338,640 1313,1320,402 1320,1328,478 1328,1334,462 1334,1338,572`;
/* cooler and warmer slivers that stay visible between the brown bursts */
const blueSlivers = `298,304,700 312,320,632 360,364,676 498,504,675 511,517,630 545,549,662 583,589,668 637,642,656 665,671,668 681,688,638 712,716,670
758,765,670 774,778,670 785,789,676 881,887,662 903,908,676 1017,1025,662 1043,1049,680 1153,1159,640 1178,1184,672 1191,1198,634 1213,1220,630`;
const redSlivers = `271,276,614 516,521,672 568,574,524 597,604,620 624,628,608 653,659,614 697,703,666 717,723,612 899,903,612 1029,1034,604
1061,1065,618 1133,1140,622 1204,1211,620 1221,1227,520 1293,1299,604`;
const purpleStripes = `297,304,776 312,317,786 326,343,790 387,391,790 423,426,778 465,471,780 486,489,900 512,517,780 528,531,790 545,549,855 567,573,800 590,605,776
612,619,602 628,631,790 639,642,780 650,654,800 664,668,778 680,683,790 688,703,806 710,714,778 720,724,790 733,737,780 746,749,790 755,762,776
779,787,772 903,907,790 944,948,776 1017,1020,800 1045,1049,804 1155,1160,780 1171,1178,790 1187,1190,790 1199,1203,790 1205,1211,780 1222,1229,786 1287,1295,826`;

/* pink baseline trace with short downward notches */
const pinkNotch: Record<number, number> = {
  2: 4, 7: 14, 8: 8, 13: 6, 20: 9, 24: 18, 30: 6, 36: 10, 41: 26, 47: 14, 49: 22, 54: 8, 57: 18, 60: 24, 67: 6, 73: 8, 76: 10, 83: 7,
  86: 9, 94: 20, 95: 8, 100: 14, 102: 20, 103: 12, 109: 24, 110: 18, 112: 10, 123: 16, 126: 8, 138: 16, 140: 12, 151: 8, 155: 12, 158: 18,
  174: 6, 179: 14, 184: 24, 185: 22, 188: 12, 193: 8, 202: 12, 206: 18, 207: 10,
};
const pinkOff = (x: number) => (x > 830 && x < 873) || (x > 984 && x < 1001) || (x > 1066 && x < 1117);
const pinkPath = `M261 1084V1050L266 1024${Array.from({ length: 214 }, (_, i) => {
  const x = 268 + i * 5;
  return pinkOff(x) ? `L${x} 1083` : `L${x} ${1021 + ((i * 7) % 6) + (pinkNotch[i] ?? 0)}`;
}).join("")}V1084Z`;

function Figure1Plot() {
  return (
    <svg className="absolute top-0 left-0" width="514" height="325" viewBox="1077 553 514 325">
      <g transform="translate(1070 470) scale(.33802 .33333)">
        <path d={bars(blueBars, 1084)} fill="#1f77b4" />
        <path d={bars(orangeBars, 1084)} fill="#ff7f0e" />
        <path d={bars(redBars, 1084)} fill="#d62728" />
        <path d={steps(purple, 1084)} fill="#9467bd" />
        <path d={bars(brownBars, 1084)} fill="#8c564b" stroke="#8c564b" strokeWidth=".8" />
        <path d={bars(blueSlivers, 790)} fill="#41708c" />
        <path d={bars(redSlivers, 790)} fill="#c42c30" />
        <path d={bars(purpleStripes, 1084)} fill="#9467bd" />
        <path d="M302 800V990M361 800V935M546 790V865M689 800V990M1066 700V1000M1174 690V815" stroke="#f28420" strokeWidth="3" />
        <path d="M532 698V785M453 600V725M387 605V720M407 592V770M797 612V770M736 595V700M753 595V700M825 612V770" stroke="#d9822b" strokeWidth="5" />
        <path d="M570 780V840M773 620V880M902 800V945M963 620V930M1066 640V700M1294 610V825M1310 670V930" stroke="#d62728" strokeWidth="3" />
        <path d="M829 1005h10v79h-10zM985 1005h5v79h-5z" fill="#9467bd" />
        <path d="M838 1058h36v26h-36zM985 1012h8v72h-8z" fill="#8c564b" />
        <path d={pinkPath} fill="#e377c2" />
        <path d="M261 1083H1338" stroke="#7f7f7f" strokeWidth="5" />
        <path d="M353 775V1083M407 775V1083M423 1010V1083M602 780V1083M782 770V1083M798 765V1083" stroke="#7f7f7f" strokeWidth="7" />
      </g>
      <Axes x0={1141.5} x1={1540.5} y0={593.5} y1={842.5}
        xt={[[1159.5, "0"], [1204.5, "250000"], [1249.5, "500000"], [1294.5, "750000"], [1339.5, "1000000"], [1383.5, "1250000"], [1428.5, "1500000"], [1473.5, "1750000"], [1518.5, "2000000"]]}
        yt={[[604.5, "4000"], [661.5, "3000"], [718.5, "2000"], [774.5, "1000"], [831.5, "0"]]} />
    </svg>
  );
}

export default function App() {
  return (
    <div className="relative flex h-[900px] w-[1600px] flex-col overflow-hidden bg-white font-['Noto_Sans','Open_Sans',sans-serif]">
      <TopPanel />
      <div className="flex min-h-0 flex-1">
        <Launcher />
        <Browser />
      </div>
      <FigureWindow title="Figure 2" className="top-[322px] left-[502px] z-50 w-[640px]"
        status={<Fit w={150} className="ml-[26px] font-['DejaVu_Sans',sans-serif]">.56627e+06  y=126.723</Fit>}>
        <Figure2Plot />
      </FigureWindow>
      <FigureWindow title="Figure 3" className="top-[467px] left-[79px] z-50 w-[448px]"><Figure3Plot /></FigureWindow>
      <FigureWindow title="Figure 1" className="top-[478px] left-[1077px] z-50 w-[514px]" active><Figure1Plot /></FigureWindow>
    </div>
  );
}
